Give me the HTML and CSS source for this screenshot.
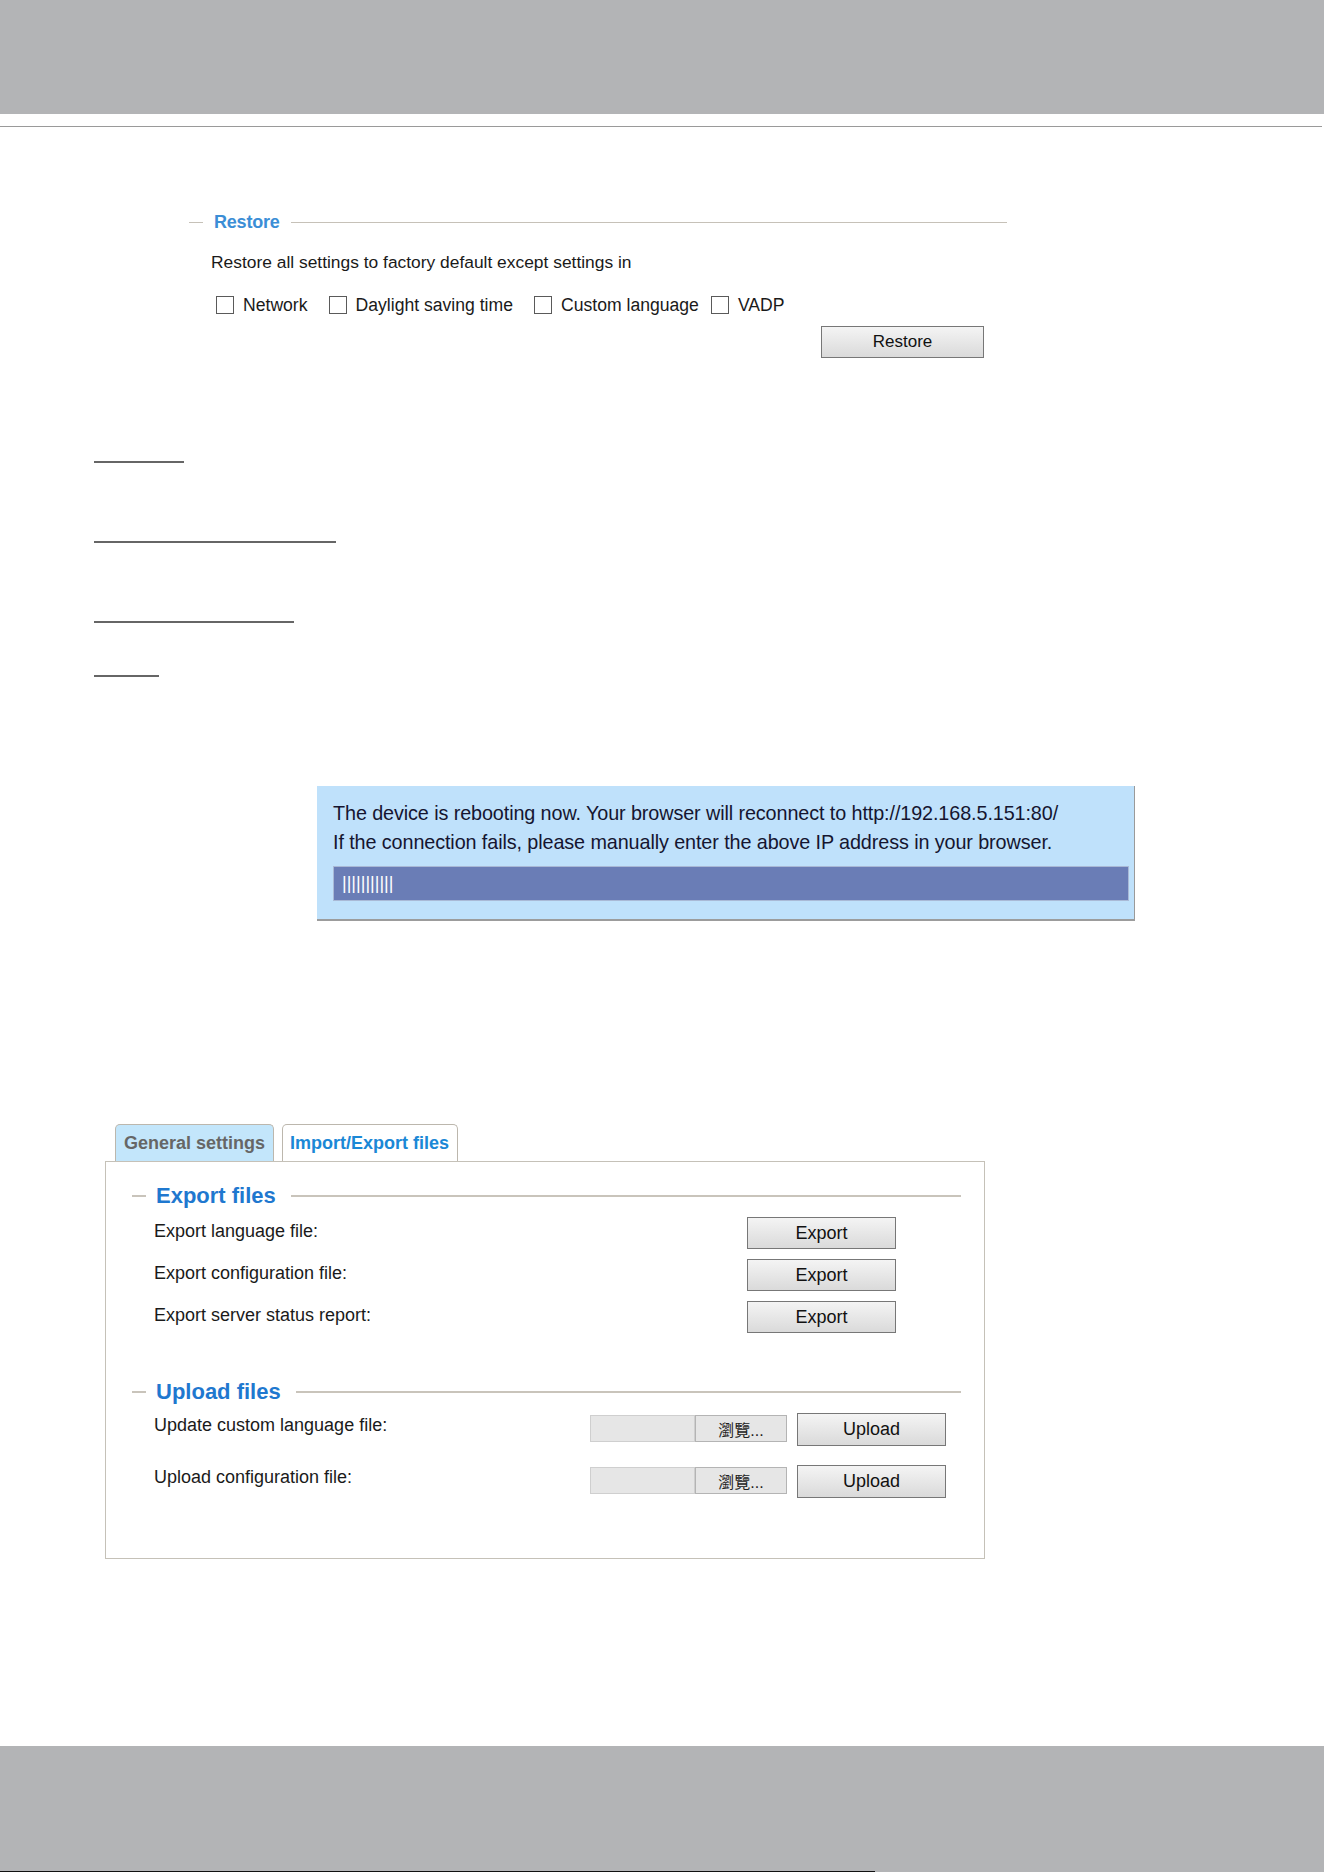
FILE: index.html
```html
<!DOCTYPE html>
<html lang="en">
<head>
<meta charset="utf-8">
<title>Maintenance</title>
<link rel="stylesheet" href="styles.css">
</head>
<body>
<div class="top"></div>
<div class="rule"></div>

<div class="restore">
  <div class="legend"><span class="dash"></span><span class="legend-text">Restore</span><span class="legend-line"></span></div>
  <div class="restore-note">Restore all settings to factory default except settings in</div>
  <div class="opts">
    <label class="opt"><input type="checkbox"> Network</label>
    <label class="opt"><input type="checkbox"> Daylight saving time</label>
    <label class="opt tight"><input type="checkbox"> Custom language</label>
    <label class="opt"><input type="checkbox"> VADP</label>
  </div>
  <div class="btn-row"><button class="btn btn_restore">Restore</button></div>
</div>

<div class="uline u1"></div>
<div class="uline u2"></div>
<div class="uline u3"></div>
<div class="uline u4"></div>

<div class="reboot">
  <div class="reboot-msg">The device is rebooting now. Your browser will reconnect to http://192.168.5.151:80/</div>
  <div class="reboot-msg">If the connection fails, please manually enter the above IP address in your browser.</div>
  <div class="progress"><span class="ticks">|||||||||||</span></div>
</div>

<div class="tabs">
  <div class="tab">General settings</div>
  <div class="tab tab_on">Import/Export files</div>
</div>
<div class="panel">
  <div class="legend big"><span class="dash"></span><span class="legend-text">Export files</span><span class="legend-line"></span></div>
  <div class="row first">
    <span class="lbl">Export language file:</span>
    <button class="btn btn_export">Export</button>
  </div>
  <div class="row">
    <span class="lbl">Export configuration file:</span>
    <button class="btn btn_export">Export</button>
  </div>
  <div class="row">
    <span class="lbl">Export server status report:</span>
    <button class="btn btn_export">Export</button>
  </div>

  <div class="legend big upload"><span class="dash"></span><span class="legend-text">Upload files</span><span class="legend-line"></span></div>
  <div class="row up first">
    <span class="lbl">Update custom language file:</span>
    <span class="file"><span class="file-name"></span><span class="browse">瀏覽...</span></span>
    <button class="btn btn_upload">Upload</button>
  </div>
  <div class="row up second">
    <span class="lbl">Upload configuration file:</span>
    <span class="file"><span class="file-name"></span><span class="browse">瀏覽...</span></span>
    <button class="btn btn_upload">Upload</button>
  </div>
</div>

<div class="bottom"><div class="bottom-edge"></div></div>
</body>
</html>
```

FILE: styles.css
```css
body {
  margin: 0;
  min-height: 1872px;
  display: flex;
  flex-direction: column;
  font-family: "Liberation Sans", Arial, sans-serif;
  color: #1a1a1a;
  background: #fff;
}

.top {
  height: 114px;
  background: #b3b4b6;
}

.rule {
  height: 1px;
  margin-top: 12px;
  margin-right: 2px;
  background: #9a9a9a;
}

/* fieldset style headings */
.legend {
  display: flex;
  align-items: center;
  height: 24px;
}
.dash {
  width: 14px;
  height: 1px;
  background: #c6c1b8;
}
.legend-text {
  margin: 0 11px;
  font-size: 18px;
  font-weight: bold;
  color: #3b8ed6;
  letter-spacing: -0.2px;
}
.legend-line {
  flex: 1;
  height: 1px;
  background: #c6c1b8;
}

.restore {
  margin: 83px 0 0 189px;
  width: 818px;
}
.restore-note {
  margin: 16px 0 0 22px;
  font-size: 17.4px;
  line-height: 24px;
}
.opts {
  display: flex;
  align-items: center;
  height: 24px;
  margin: 19px 0 0 27px;
  font-size: 17.6px;
}
.opt {
  display: flex;
  align-items: center;
  margin-right: 21px;
}
.opt.tight {
  margin-right: 12px;
}
.opt input {
  -webkit-appearance: none;
  appearance: none;
  width: 18px;
  height: 18px;
  margin: 0 9px 0 0;
  border: 1px solid #5a5a5a;
  background: #fff;
}

.btn-row {
  display: flex;
  justify-content: flex-end;
  padding-right: 23px;
  margin-top: 9px;
}

.btn {
  box-sizing: border-box;
  font-family: "Liberation Sans", Arial, sans-serif;
  color: #111;
  border: 1px solid #777;
  background: #e6e6e6;
  background-image: linear-gradient(to bottom, #f4f4f4, #dadada);
  padding: 0;
}
.btn_restore {
  width: 163px;
  height: 32px;
  font-size: 17px;
}

.uline {
  height: 2px;
  margin-left: 94px;
  background: #666;
}
.u1 { width: 90px;  margin-top: 103px; }
.u2 { width: 242px; margin-top: 78px; }
.u3 { width: 200px; margin-top: 78px; }
.u4 { width: 65px;  margin-top: 52px; }

.reboot {
  box-sizing: border-box;
  width: 818px;
  height: 135px;
  margin: 109px 0 0 317px;
  padding: 13px 5px 0 16px;
  background: #bfe1fb;
  border-right: 1px solid #9a9a9a;
  border-bottom: 2px solid #9c9c9c;
}
.reboot-msg {
  font-size: 19.8px;
  line-height: 29px;
  color: #151530;
  letter-spacing: -0.1px;
  white-space: nowrap;
}
.progress {
  height: 35px;
  margin-top: 9px;
  box-sizing: border-box;
  padding: 0 0 0 8px;
  background: #6a7db6;
  border: 1px solid #a9b9d6;
  display: flex;
  align-items: center;
}
.ticks {
  color: #fff;
  font-size: 18px;
  letter-spacing: 0;
}

.tabs {
  display: flex;
  gap: 8px;
  margin: 203px 0 0 105px;
  padding-left: 10px;
  height: 37px;
}
.tab {
  box-sizing: border-box;
  height: 37px;
  padding: 0 8px;
  display: flex;
  align-items: center;
  font-size: 18px;
  font-weight: bold;
  color: #666;
  background: #c3e6fb;
  border: 1px solid #bcb7ad;
  border-bottom: none;
  border-radius: 5px 5px 0 0;
}
.tab_on {
  padding: 0 8px 0 7px;
  color: #1b88d6;
  background: #fff;
}

.panel {
  box-sizing: border-box;
  width: 880px;
  height: 398px;
  margin-left: 105px;
  padding: 22px 23px 0 26px;
  border: 1px solid #c5c1b8;
}
.legend.big .legend-text {
  margin: 0 15px 0 10px;
  font-size: 22px;
  color: #1f78cf;
  letter-spacing: 0;
}
.legend.big .dash,
.legend.big .legend-line {
  background: #c9c4bb;
  height: 2px;
}
.legend.upload {
  margin-top: 47px;
}

.row {
  display: flex;
  align-items: flex-start;
  margin-top: 10px;
  padding-left: 22px;
}
.row.first {
  margin-top: 9px;
}
.lbl {
  flex: 0 0 593px;
  font-size: 18px;
  line-height: 28px;
}
.btn_export {
  width: 149px;
  height: 32px;
  font-size: 18px;
}

.row.up .lbl {
  flex: 0 0 436px;
  line-height: 24px;
}
.row.up.second {
  margin-top: 19px;
}
.file {
  display: flex;
  height: 27px;
  margin-top: 2px;
}
.file-name {
  box-sizing: border-box;
  width: 105px;
  background: #e6e6e6;
  border: 1px solid #cfcfcf;
}
.browse {
  box-sizing: border-box;
  width: 92px;
  display: flex;
  align-items: center;
  justify-content: center;
  font-family: "Liberation Sans", "Noto Sans CJK TC", sans-serif;
  font-size: 16px;
  color: #222;
  background: #e6e6e6;
  border: 1px solid #b4b4b4;
}
.btn_upload {
  width: 149px;
  height: 33px;
  margin-left: 10px;
  font-size: 18px;
}

.bottom {
  margin-top: auto;
  height: 126px;
  background: #b3b4b6;
  display: flex;
  align-items: flex-end;
}
.bottom-edge {
  width: 875px;
  height: 1px;
  background: #111;
}
```
